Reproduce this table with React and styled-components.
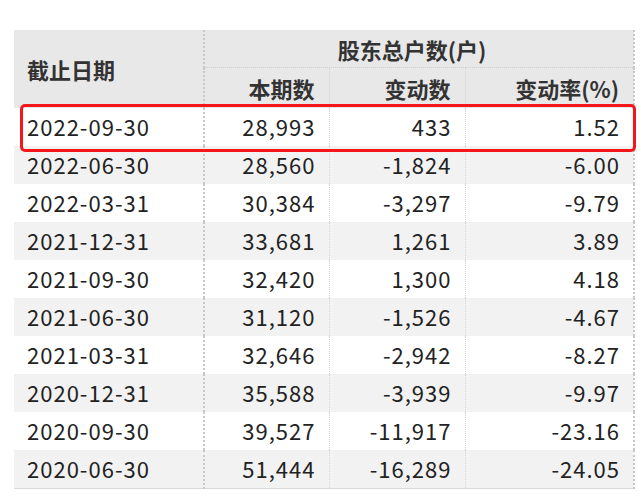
import React from 'react'
import styled, { createGlobalStyle } from 'styled-components'

const GlobalStyle = createGlobalStyle`
  body {
    margin: 0;
    background: #fff;
    font-family: "Noto Sans CJK SC", "Noto Sans", sans-serif;
  }
`

const rows = [
  ['2022-09-30', '28,993', '433', '1.52'],
  ['2022-06-30', '28,560', '-1,824', '-6.00'],
  ['2022-03-31', '30,384', '-3,297', '-9.79'],
  ['2021-12-31', '33,681', '1,261', '3.89'],
  ['2021-09-30', '32,420', '1,300', '4.18'],
  ['2021-06-30', '31,120', '-1,526', '-4.67'],
  ['2021-03-31', '32,646', '-2,942', '-8.27'],
  ['2020-12-31', '35,588', '-3,939', '-9.97'],
  ['2020-09-30', '39,527', '-11,917', '-23.16'],
  ['2020-06-30', '51,444', '-16,289', '-24.05'],
]

const Wrap = styled.div`
  position: relative;
  padding: 30px 0 0 14px;
`

const Table = styled.table`
  border-collapse: collapse;
  table-layout: fixed;
  width: 620px;
  border-bottom: 1px solid #d9d9d9;
  color: #222;
`

const HeadCell = styled.th`
  background: #e8e8e8;
  color: #333;
  font-weight: 700;
  font-size: 22px;
  padding: 0 ${(p) => (p.$left ? '0 0 13px' : '14px 0 0')};
  text-align: ${(p) => p.$align || 'right'};
  height: ${(p) => p.$h || 38}px;
  border-left: ${(p) => p.$border || 'none'};
  border-right: ${(p) => (p.$last ? '2px dotted #c8c8c8' : 'none')};
  border-bottom: ${(p) => (p.$group ? '1px dotted #cfcfcf' : 'none')};
`

const Row = styled.tr`
  background: ${(p) => (p.$odd ? '#f2f2f2' : '#fff')};
`

const Cell = styled.td`
  height: 36px;
  padding: 0 ${(p) => (p.$first ? '0 0 13px' : '13px 0 0')};
  padding-bottom: 2px;
  font-size: 22px;
  line-height: 30px;
  letter-spacing: 1px;
  text-align: ${(p) => (p.$first ? 'left' : 'right')};
  border-left: ${(p) => p.$border || 'none'};
  border-right: ${(p) => (p.$last ? '2px dotted #c8c8c8' : 'none')};
  white-space: nowrap;
`

const Highlight = styled.div`
  position: absolute;
  left: 20px;
  top: 104px;
  width: 610px;
  height: 42px;
  border: 3px solid #f5161b;
  border-radius: 5px;
  pointer-events: none;
`

const thick = '2px dotted #c8c8c8'
const thin = '1px dotted #d6d6d6'

export default function App() {
  return (
    <Wrap>
      <GlobalStyle />
      <Table>
        <colgroup>
          <col style={{ width: 190 }} />
          <col style={{ width: 125 }} />
          <col style={{ width: 136 }} />
          <col style={{ width: 169 }} />
        </colgroup>
        <thead>
          <tr>
            <HeadCell rowSpan={2} $left $align="left" $h={37}>
              截止日期
            </HeadCell>
            <HeadCell colSpan={3} $align="center" $border={thick} $last $group $h={37}>
              股东总户数(户)
            </HeadCell>
          </tr>
          <tr>
            <HeadCell $border={thick} $h={40}>本期数</HeadCell>
            <HeadCell $border={thin} $h={40}>变动数</HeadCell>
            <HeadCell $border={thin} $last $h={40}>变动率(%)</HeadCell>
          </tr>
        </thead>
        <tbody>
          {rows.map((r, i) => (
            <Row key={r[0]} $odd={i % 2 === 1}>
              <Cell $first>{r[0]}</Cell>
              <Cell $border={thick}>{r[1]}</Cell>
              <Cell $border={thin}>{r[2]}</Cell>
              <Cell $border={thin} $last>{r[3]}</Cell>
            </Row>
          ))}
        </tbody>
      </Table>
      <Highlight />
    </Wrap>
  )
}
